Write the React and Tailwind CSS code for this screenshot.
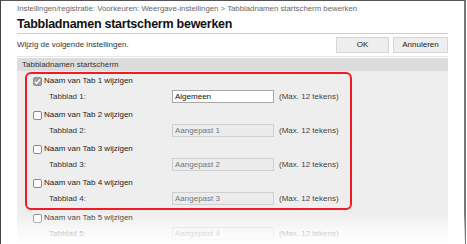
import React from "react";

function Check({ checked }) {
  if (checked) {
    return (
      <span className="w-[9px] h-[9px] rounded-[2px] bg-[#a0a0a0] border border-[#909090] flex items-center justify-center shrink-0">
        <svg width="7" height="7" viewBox="0 0 8 8">
          <path d="M1 4.2 L3.1 6.2 L7 1.6" fill="none" stroke="#fff" strokeWidth="1.6" />
        </svg>
      </span>
    );
  }
  return <span className="w-[9px] h-[9px] rounded-[2px] bg-white border border-[#8a8a8a] shrink-0" />;
}

function Group({ n, value, checked, last }) {
  return (
    <div className={last ? "" : "mb-[3px]"}>
      <div className="h-[14px] flex items-center pl-[6px] gap-[2px]">
        <Check checked={checked} />
        <span className="text-[8px] text-[#222]">Naam van Tab {n} wijzigen</span>
      </div>
      <div className="h-[17px] flex items-center pl-[22px]">
        <span className="w-[123px] text-[8px] text-[#333]">Tabblad {n}:</span>
        <div
          className={
            "w-[102px] h-[13px] flex items-center px-[2px] text-[8px] border " +
            (checked ? "bg-white border-[#a8a8a8] text-[#111]" : "bg-[#ececec] border-[#cfcfcf] text-[#777]")
          }
        >
          {value}
        </div>
        <span className="ml-[5px] text-[8px] text-[#444]">(Max. 12 tekens)</span>
      </div>
    </div>
  );
}

export default function App() {
  return (
    <div className="w-[467px] h-[244px] overflow-hidden bg-white relative" style={{ fontFamily: '"Liberation Sans", Arial, sans-serif' }}>
      <div className="w-[466px] h-[260px] border-l border-t border-r-2 border-l-[#444] border-t-[#555] border-r-[#777] pl-[16px] pr-[16px]">
        <div className="h-[15px] flex items-center text-[7.8px] text-[#666] whitespace-nowrap">
          Instellingen/registratie: Voorkeuren: Weergave-instellingen &gt; Tabbladnamen startscherm bewerken
        </div>
        <div className="h-[18px] flex items-center text-[12.5px] tracking-[-0.25px] font-bold text-[#111] border-b border-[#cfcfcf] whitespace-nowrap">
          Tabbladnamen startscherm bewerken
        </div>
        <div className="h-[23px] flex items-center justify-between border-b border-[#e6e6e6]">
          <span className="text-[8px] text-[#333]">Wijzig de volgende instellingen.</span>
          <div className="flex gap-[4px]">
            <div className="w-[53px] h-[16px] bg-[#eeeeee] border border-[#d6d6d6] flex items-center justify-center text-[8px] text-[#222]">OK</div>
            <div className="w-[55px] h-[16px] bg-[#eeeeee] border border-[#d6d6d6] flex items-center justify-center text-[8px] text-[#222]">Annuleren</div>
          </div>
        </div>
        <div className="mt-[1px] h-[13px] bg-[#dcdcdc] flex items-center pl-[5px] text-[8px] text-[#333]">
          Tabbladnamen startscherm
        </div>
        <div className="bg-[#eeeeee] pt-[1px] pl-[8px] h-[200px]">
          <div className="w-[327px] border-2 border-[#ef1c24] rounded-[6px] pb-[1px]">
            <Group n={1} value="Algemeen" checked />
            <Group n={2} value="Aangepast 1" />
            <Group n={3} value="Aangepast 2" />
            <Group n={4} value="Aangepast 3" last />
          </div>
          <div className="w-[327px] pt-[1px] pl-[2px]">
            <Group n={5} value="Aangepast 4" last />
          </div>
        </div>
      </div>
      <div className="absolute left-[1px] right-[2px] top-[213px] h-[31px] bg-gradient-to-b from-white/0 via-white/60 to-white" />
    </div>
  );
}
